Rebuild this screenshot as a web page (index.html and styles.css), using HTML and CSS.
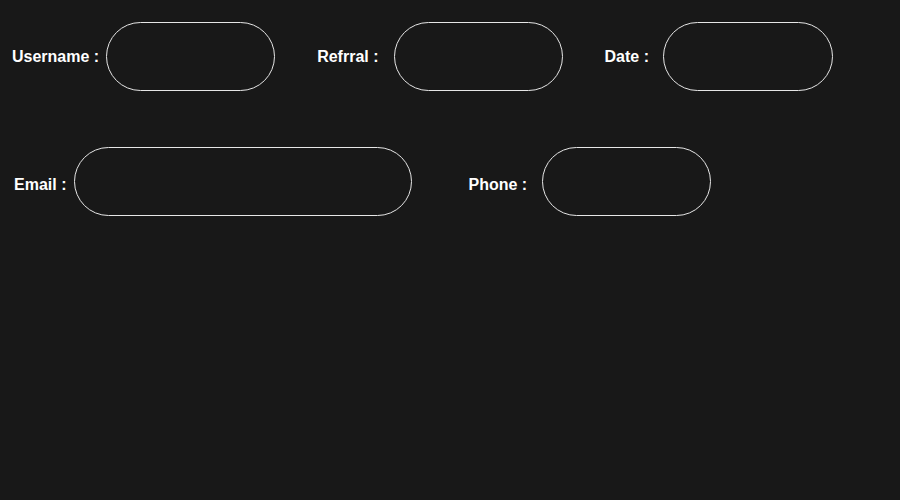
FILE: index.html
```html
<!DOCTYPE html>
<html lang="en">
<head>
  <meta charset="UTF-8" />
  <meta name="viewport" content="width=device-width, initial-scale=1.0"/>
  <title>Form</title>
  <link rel="stylesheet" href="styles.css">
</head>
<body>
  <form class="form">
    <div class="row row-top">
      <div class="field field-user">
        <label for="username">Username :</label>
        <input id="username" type="text">
      </div>
      <div class="field field-ref">
        <label for="refrral">Refrral :</label>
        <input id="refrral" type="text">
      </div>
      <div class="field field-date">
        <label for="date">Date :</label>
        <input id="date" type="text">
      </div>
    </div>
    <div class="row row-bottom">
      <div class="field field-email">
        <label for="email">Email :</label>
        <input id="email" class="wide" type="text">
      </div>
      <div class="field field-phone">
        <label for="phone">Phone :</label>
        <input id="phone" type="text">
      </div>
    </div>
  </form>
</body>
</html>
```

FILE: styles.css
```css
body {
  background-color: #181818;
  margin: 0;
  padding: 0;
  font-family: "Liberation Sans", Arial, sans-serif;
  color: #fff;
}
.form {
  padding-top: 22px;
}
.row {
  display: flex;
  align-items: center;
}
.row-top {
  padding-left: 12px;
}
.row-bottom {
  margin-top: 56px;
  padding-left: 14px;
}
/* labels of the second row sit a little lower */
.row-bottom label {
  padding-top: 7px;
}
.field {
  display: flex;
  align-items: center;
}
.field label {
  font-size: 16px;
  font-weight: bold;
}
.field input {
  width: 169px;
  height: 69px;
  box-sizing: border-box;
  border: 1px solid #e6e6e6;
  border-radius: 35px;
  background-color: #181818;
  color: #fff;
  outline: none;
}
.field input.wide {
  width: 338px;
}
.field-user input { margin-left: 7px; }
.field-ref { margin-left: 42px; }
.field-ref input { margin-left: 15px; }
.field-date { margin-left: 42px; }
.field-date input { margin-left: 14px; width: 170px; }
.field-email input { margin-left: 8px; }
.field-phone { margin-left: 56px; }
.field-phone input { margin-left: 15px; }
```
